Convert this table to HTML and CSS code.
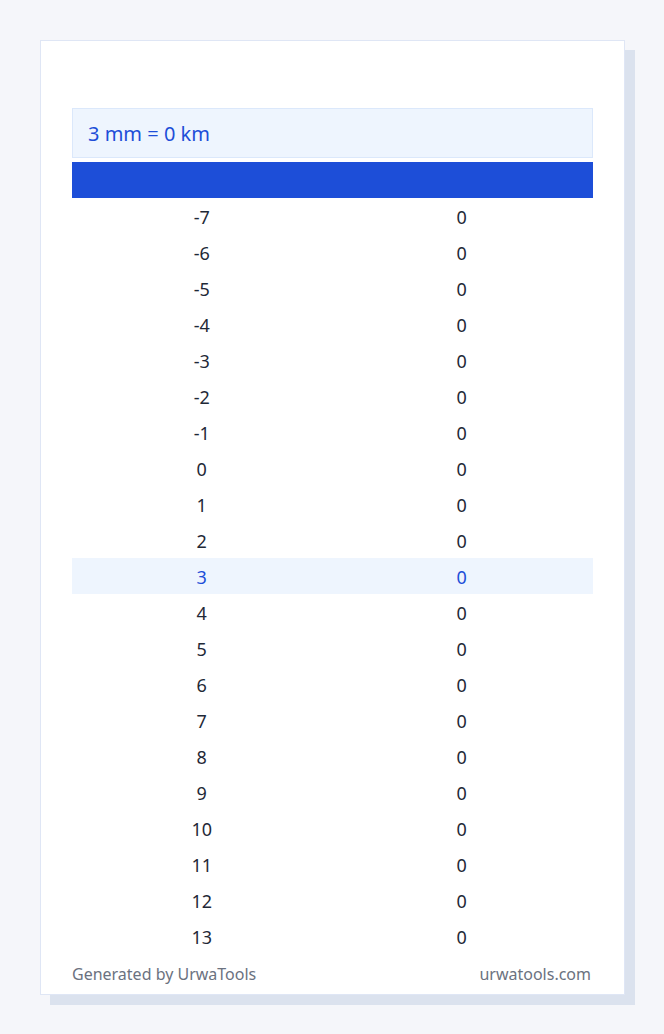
FILE: index.html
```html
<!DOCTYPE html>
<html>
<head>
<meta charset="utf-8">
<link rel="stylesheet" href="styles.css">
</head>
<body>
<div class="card">
  <div class="title"></div>
  <div class="summary">3 mm = 0 km</div>
  <table class="tbl">
    <thead><tr><th></th><th></th></tr></thead>
    <tbody>
      <tr><td>-7</td><td>0</td></tr>
      <tr><td>-6</td><td>0</td></tr>
      <tr><td>-5</td><td>0</td></tr>
      <tr><td>-4</td><td>0</td></tr>
      <tr><td>-3</td><td>0</td></tr>
      <tr><td>-2</td><td>0</td></tr>
      <tr><td>-1</td><td>0</td></tr>
      <tr><td>0</td><td>0</td></tr>
      <tr><td>1</td><td>0</td></tr>
      <tr><td>2</td><td>0</td></tr>
      <tr class="hl"><td>3</td><td>0</td></tr>
      <tr><td>4</td><td>0</td></tr>
      <tr><td>5</td><td>0</td></tr>
      <tr><td>6</td><td>0</td></tr>
      <tr><td>7</td><td>0</td></tr>
      <tr><td>8</td><td>0</td></tr>
      <tr><td>9</td><td>0</td></tr>
      <tr><td>10</td><td>0</td></tr>
      <tr><td>11</td><td>0</td></tr>
      <tr><td>12</td><td>0</td></tr>
      <tr><td>13</td><td>0</td></tr>
    </tbody>
  </table>
  <div class="footer"><span>Generated by UrwaTools</span><span>urwatools.com</span></div>
</div>
</body>
</html>
```
FILE: styles.css
```css
html, body { margin: 0; padding: 0; }
body {
  background: #f5f6fa;
  font-family: "Noto Sans", "Open Sans", sans-serif;
  width: 664px;
  height: 1034px;
}
.card {
  box-sizing: border-box;
  margin: 40px 0 0 40px;
  width: 585px;
  height: 955px;
  background: #fff;
  border: 1px solid #dfe6f5;
  box-shadow: 10px 10px 0 #dbe2ee;
  padding: 31px 31px 0 31px;
  display: flex;
  flex-direction: column;
}
.title { height: 36px; }
.summary {
  box-sizing: border-box;
  height: 50px;
  background: #eef5fe;
  border: 1px solid #dbe8fb;
  color: #1d4ed8;
  font-size: 20px;
  line-height: 46px;
  padding: 2px 0 0 15px;
}
.tbl {
  margin-top: 4px;
  width: 100%;
  border-collapse: collapse;
  table-layout: fixed;
}
.tbl th {
  background: #1d4ed8;
  height: 36px;
  padding: 0;
}
.tbl td {
  box-sizing: border-box;
  height: 36px;
  padding: 2px 0 0 0;
  text-align: center;
  font-size: 18px;
  color: #1f2937;
  line-height: 34px;
}
.tbl td:first-child { padding-right: 1px; }
.tbl td:last-child { padding-right: 2px; }
.tbl tr.hl td {
  background: #eef5fe;
  color: #1d4ed8;
}
.footer {
  display: flex;
  justify-content: space-between;
  font-size: 16px;
  color: #6b7280;
  margin-top: 9px;
  padding-right: 2px;
}
```
